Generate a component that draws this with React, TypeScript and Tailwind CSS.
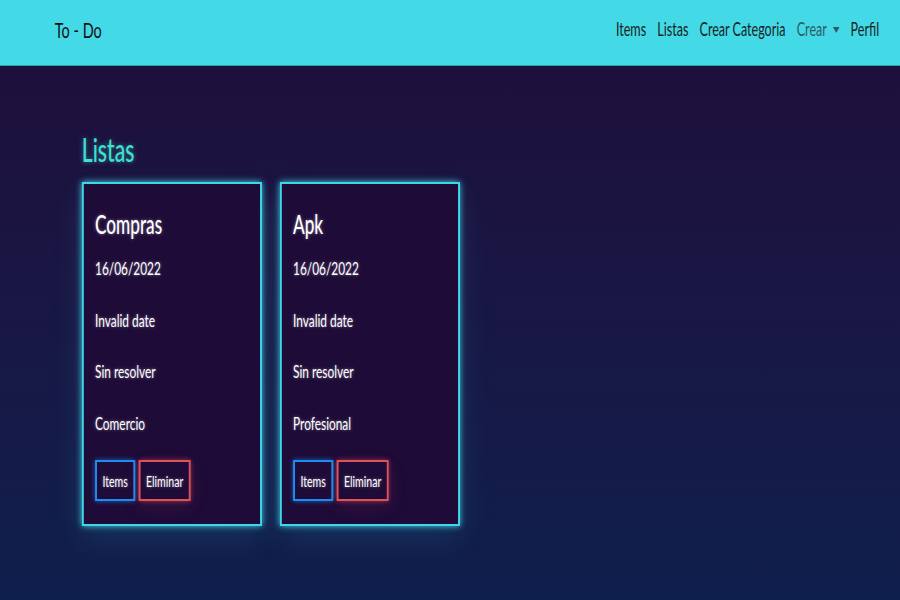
import React from "react";

const lists = [
	{ name: "Compras", date: "16/06/2022", due: "Invalid date", status: "Sin resolver", category: "Comercio" },
	{ name: "Apk", date: "16/06/2022", due: "Invalid date", status: "Sin resolver", category: "Profesional" },
];

const glowText = "[text-shadow:0_0_4px_rgba(255,255,255,0.45)]";

function Card({ item }: { item: (typeof lists)[number] }) {
	return (
		<div className="flex w-[273px] flex-col border-x-[3px] border-y-2 border-[#3fd6e8] bg-[#1e0b38] px-[17px] pt-[22px] pb-[23px] shadow-[0_0_8px_#3fd6e8,0_12px_40px_rgba(63,214,232,0.12)]">
			<h2 className={`text-[26px] leading-[36px] font-medium text-white ${glowText}`}>{item.name}</h2>
			<p className={`mt-[14px] text-[18px] leading-[24px] text-white ${glowText}`}>{item.date}</p>
			<p className={`mt-[28px] text-[18px] leading-[24px] text-white ${glowText}`}>{item.due}</p>
			<p className={`mt-[27px] text-[18px] leading-[24px] text-white ${glowText}`}>{item.status}</p>
			<p className={`mt-[28px] text-[18px] leading-[24px] text-white ${glowText}`}>{item.category}</p>
			<div className="mt-[25px] flex gap-[5px]">
				<button className={`h-[41px] w-[61px] border-x-[3px] border-y-2 border-[#1d8cf0] text-[16px] text-white shadow-[0_0_6px_rgba(29,140,240,0.7)] ${glowText}`}>
					Items
				</button>
				<button className={`h-[41px] w-[79px] border-x-[3px] border-y-2 border-[#e0505a] text-[16px] text-white shadow-[0_0_6px_rgba(224,80,90,0.6),0_6px_24px_rgba(224,80,90,0.12)] ${glowText}`}>
					Eliminar
				</button>
			</div>
		</div>
	);
}

export default function App() {
	return (
		<div className="h-screen w-full overflow-hidden">
			<div className="flex h-[600px] w-[1364px] origin-top-left scale-x-[0.66] flex-col bg-gradient-to-b from-[#1e0d3a] to-[#0f1f4d] font-['Lato',sans-serif]">
				<nav className="flex h-[66px] shrink-0 items-center justify-between border-b border-[#2a9fae] bg-[#43d9e6] pr-[32px] pb-[6px] pl-[83px]">
					<span className="text-[22px] text-[#111]">To - Do</span>
					<div className="flex items-center gap-[17px] text-[19px] text-[#1a1f24]">
						<a>Items</a>
						<a>Listas</a>
						<a>Crear Categoria</a>
						<a className="flex items-center text-[#2f5c63]">
							Crear
							<span className="ml-[9px] inline-block border-x-[5px] border-t-[6px] border-x-transparent border-t-[#2f5c63]" />
						</a>
						<a>Perfil</a>
					</div>
				</nav>
				<main className="pl-[124px]">
					<h1 className="mt-[64px] text-[32px] leading-[40px] font-medium text-[#3fe0d2] [text-shadow:0_0_6px_rgba(63,224,210,0.5)]">
						Listas
					</h1>
					<div className="mt-[12px] flex gap-[27px]">
						{lists.map((l) => (
							<Card key={l.name} item={l} />
						))}
					</div>
				</main>
			</div>
		</div>
	);
}
